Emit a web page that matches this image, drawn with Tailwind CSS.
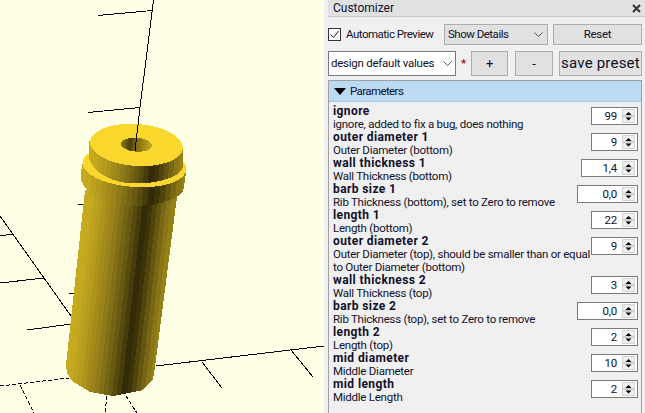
<!DOCTYPE html>
<html lang="en">
<head>
  <meta charset="UTF-8">
  <title>Customizer</title>
  <script src="https://cdn.jsdelivr.net/npm/@tailwindcss/browser@4"></script>
</head>
<body class="w-[645px] h-[413px] overflow-hidden flex bg-[#f0f0f0] font-['Roboto',sans-serif] text-[11.5px] tracking-[-0.25px] leading-[13px] text-[#10102a]">

  <!-- 3D view -->
  <div class="w-[324px] h-[413px] shrink-0 bg-[#ffffe5]">
    <svg width="324" height="413" viewBox="0 0 324 413" fill="none" shape-rendering="crispEdges">
      <defs>
        <linearGradient id="facets">
          <stop offset="0" stop-color="#c6ab20"/><stop offset=".05" stop-color="#c6ab20"/>
          <stop offset=".05" stop-color="#c4a920"/><stop offset=".10" stop-color="#c4a920"/>
          <stop offset=".10" stop-color="#bda21f"/><stop offset=".15" stop-color="#bda21f"/>
          <stop offset=".15" stop-color="#b59b1e"/><stop offset=".20" stop-color="#b59b1e"/>
          <stop offset=".20" stop-color="#ac941c"/><stop offset=".25" stop-color="#ac941c"/>
          <stop offset=".25" stop-color="#a38b1b"/><stop offset=".30" stop-color="#a38b1b"/>
          <stop offset=".30" stop-color="#99831a"/><stop offset=".35" stop-color="#99831a"/>
          <stop offset=".35" stop-color="#8e7a18"/><stop offset=".40" stop-color="#8e7a18"/>
          <stop offset=".40" stop-color="#827016"/><stop offset=".45" stop-color="#827016"/>
          <stop offset=".45" stop-color="#756414"/><stop offset=".50" stop-color="#756414"/>
          <stop offset=".50" stop-color="#675812"/><stop offset=".55" stop-color="#675812"/>
          <stop offset=".55" stop-color="#574a0f"/><stop offset=".60" stop-color="#574a0f"/>
          <stop offset=".60" stop-color="#453b0b"/><stop offset=".65" stop-color="#453b0b"/>
          <stop offset=".65" stop-color="#332b07"/><stop offset=".71" stop-color="#332b07"/>
          <stop offset=".71" stop-color="#3c3308"/><stop offset=".76" stop-color="#3c3308"/>
          <stop offset=".76" stop-color="#50440c"/><stop offset=".81" stop-color="#50440c"/>
          <stop offset=".81" stop-color="#645510"/><stop offset=".86" stop-color="#645510"/>
          <stop offset=".86" stop-color="#776614"/><stop offset=".91" stop-color="#776614"/>
          <stop offset=".91" stop-color="#8a7617"/><stop offset=".96" stop-color="#8a7617"/>
          <stop offset=".96" stop-color="#968119"/><stop offset="1" stop-color="#968119"/>
        </linearGradient>
        <linearGradient id="bodyShade" href="#facets" gradientUnits="userSpaceOnUse" x1="66" y1="365" x2="155" y2="375"/>
        <linearGradient id="collarShade" href="#facets" gradientUnits="userSpaceOnUse" x1="81" y1="175" x2="186" y2="184"/>
        <linearGradient id="bossShade" href="#facets" gradientUnits="userSpaceOnUse" x1="89" y1="150" x2="183" y2="158"/>
        <linearGradient id="holeShade" gradientUnits="userSpaceOnUse" x1="121" y1="144" x2="152" y2="146">
          <stop offset="0" stop-color="#8c7815"/><stop offset=".3" stop-color="#4a3f0a"/>
          <stop offset=".5" stop-color="#7e6c13"/><stop offset="1" stop-color="#c6aa1f"/>
        </linearGradient>
      </defs>

      <!-- axes behind the model -->
      <g stroke="#000" stroke-width="1">
        <path d="M153.500 0L140 107.500M98 15.500L152 10.500M88 112.500L140 107.500"/>
        <path d="M78 205L87 204M69 294L78 293"/>
        <path d="M0 216L71 316M0 236L13 234M0 283L44 278M27 330L71 324"/>
        <path d="M156 366L324 346M202 362L222 388M291 350L313 377"/>
        <path d="M0 386L69 378M20 385L34 413M107 396L105 413M126 396L137 413" stroke-dasharray="4 2"/>
      </g>

      <!-- barrel -->
      <path d="M85 190L66 365L67 373L72 381L90 392L113 396L143 390L153 379L155 367L177 197Z" fill="url(#bodyShade)"/>
      <!-- collar -->
      <path d="M83 162L81 172L81.500 181L85 188C95 199 115 206 133 206C155 206 175 201 183 192L185 180L186 172Z" fill="url(#collarShade)"/>
      <ellipse cx="134.500" cy="166" rx="52" ry="21" transform="rotate(4 134.500 166)" fill="#f9d72c"/>
      <!-- boss -->
      <path d="M89 141L88.500 157C92 172 112 183.500 135 183.500C160 183.500 180 177 183 167L183 147Z" fill="url(#bossShade)"/>
      <ellipse cx="136.500" cy="145" rx="46.500" ry="21" transform="rotate(4 136.500 145)" fill="#f9d72c"/>
      <ellipse cx="136.500" cy="144.700" rx="15.500" ry="7" transform="rotate(4 136.500 144.700)" fill="url(#holeShade)"/>
      <path d="M140 107.500L135 151" stroke="#000" stroke-width="1"/>
    </svg>
  </div>

  <!-- Customizer dock -->
  <div class="w-[4px] shrink-0"></div>
  <div class="flex-1 min-w-0 flex flex-col">
    <div class="h-[17px] bg-[#e1e1e1] border-b border-[#c8c8c8] flex items-center justify-between pl-[5px] pr-[4px] text-[12px] tracking-normal">
      <span>Customizer</span>
      <svg width="9" height="9" viewBox="0 0 9 9"><path d="M1 1L8 8M8 1L1 8" stroke="#333" stroke-width="2"/></svg>
    </div>

    <div class="flex items-center mt-[7px] pr-[3px] h-[21px]">
      <span class="w-[13px] h-[13px] border border-[#333] bg-white flex items-center justify-center shrink-0">
        <svg width="11" height="11" viewBox="0 0 11 11"><path d="M1.500 5.500L4.500 8.500L9.500 2" stroke="#222" fill="none"/></svg>
      </span>
      <span class="ml-[5px] w-[98px] shrink-0 whitespace-nowrap tracking-[-0.5px]">Automatic Preview</span>
      <div class="w-[104px] h-[21px] shrink-0 bg-[#e1e1e1] border border-[#adadad] flex items-center justify-between pl-[3px] pr-[4px]">
        <span class="tracking-[-0.5px]">Show Details</span>
        <svg width="9" height="5" viewBox="0 0 9 5"><path d="M.5 .5L4.500 4.500L8.500 .5" stroke="#555" fill="none"/></svg>
      </div>
      <button class="ml-[5px] flex-1 h-[21px] bg-[#e1e1e1] border border-[#adadad]">Reset</button>
    </div>

    <div class="flex items-center mt-[6px] pr-[3px] h-[25px]">
      <div class="w-[128px] h-[25px] shrink-0 bg-white border border-[#7a7a7a] flex items-center justify-between pl-[2px] pr-[3px]">
        <span class="whitespace-nowrap">design default values</span>
        <svg width="9" height="5" viewBox="0 0 9 5"><path d="M.5 .5L4.500 4.500L8.500 .5" stroke="#555" fill="none"/></svg>
      </div>
      <span class="w-[15px] shrink-0 text-center text-[#a01010] font-bold">*</span>
      <button class="w-[37px] h-[25px] shrink-0 bg-[#e1e1e1] border border-[#adadad] text-[13px]">+</button>
      <button class="ml-[7px] w-[38px] h-[25px] shrink-0 bg-[#e1e1e1] border border-[#adadad] text-[13px]">-</button>
      <button class="ml-[6px] flex-1 h-[25px] bg-[#e1e1e1] border border-[#adadad] text-[15px] tracking-[0.2px] whitespace-nowrap">save preset</button>
    </div>

    <div class="mt-[4px] mr-[3px] flex-1 border-x border-t border-[#a0a0a0]">
      <div class="h-[21px] bg-[#bcdaf2] border-b border-[#a9c9e3] flex items-center pl-[5px]">
        <svg width="12" height="7" viewBox="0 0 12 7"><path d="M0 0H12L6 7Z" fill="#000"/></svg>
        <span class="ml-[4px] mt-[1px] tracking-[-0.6px]">Parameters</span>
      </div>

      <div class="pt-[2px] pl-[4px] pr-[3px]">
        <div class="flex justify-between h-[26px]">
          <div class="whitespace-nowrap pt-[1px]"><p class="font-bold text-[12px] tracking-[0.4px]">ignore</p><p class="leading-[12px]">ignore, added to fix a bug, does nothing</p></div>
          <div class="w-[47px] h-[18px] mt-[3px] shrink-0 border border-[#7a7a7a] bg-white flex items-center justify-end pr-[2px]">
            <span class="mr-[5px]">99</span><svg width="13" height="14"><use href="#spin"/></svg>
          </div>
        </div>
        <div class="flex justify-between h-[26px]">
          <div class="whitespace-nowrap pt-[1px]"><p class="font-bold text-[12px] tracking-[0.4px]">outer diameter 1</p><p class="leading-[12px]">Outer Diameter (bottom)</p></div>
          <div class="w-[47px] h-[18px] mt-[3px] shrink-0 border border-[#7a7a7a] bg-white flex items-center justify-end pr-[2px]">
            <span class="mr-[5px]">9</span><svg width="13" height="14"><use href="#spin"/></svg>
          </div>
        </div>
        <div class="flex justify-between h-[26px]">
          <div class="whitespace-nowrap pt-[1px]"><p class="font-bold text-[12px] tracking-[0.4px]">wall thickness 1</p><p class="leading-[12px]">Wall Thickness (bottom)</p></div>
          <div class="w-[57px] h-[18px] mt-[3px] shrink-0 border border-[#7a7a7a] bg-white flex items-center justify-end pr-[2px]">
            <span class="mr-[5px]">1,4</span><svg width="13" height="14"><use href="#spin"/></svg>
          </div>
        </div>
        <div class="flex justify-between h-[26px]">
          <div class="whitespace-nowrap pt-[1px]"><p class="font-bold text-[12px] tracking-[0.4px]">barb size 1</p><p class="leading-[12px]">Rib Thickness (bottom), set to Zero to remove</p></div>
          <div class="w-[61px] h-[18px] mt-[3px] shrink-0 border border-[#7a7a7a] bg-white flex items-center justify-end pr-[2px]">
            <span class="mr-[5px]">0,0</span><svg width="13" height="14"><use href="#spin"/></svg>
          </div>
        </div>
        <div class="flex justify-between h-[26px]">
          <div class="whitespace-nowrap pt-[1px]"><p class="font-bold text-[12px] tracking-[0.4px]">length 1</p><p class="leading-[12px]">Length (bottom)</p></div>
          <div class="w-[47px] h-[18px] mt-[3px] shrink-0 border border-[#7a7a7a] bg-white flex items-center justify-end pr-[2px]">
            <span class="mr-[5px]">22</span><svg width="13" height="14"><use href="#spin"/></svg>
          </div>
        </div>
        <div class="flex justify-between h-[39px]">
          <div class="whitespace-nowrap pt-[1px]"><p class="font-bold text-[12px] tracking-[0.4px]">outer diameter 2</p><p class="leading-[12.500px]">Outer Diameter (top), should be smaller than or equal<br>to Outer Diameter (bottom)</p></div>
          <div class="w-[47px] h-[18px] mt-[3px] shrink-0 border border-[#7a7a7a] bg-white flex items-center justify-end pr-[2px]">
            <span class="mr-[5px]">9</span><svg width="13" height="14"><use href="#spin"/></svg>
          </div>
        </div>
        <div class="flex justify-between h-[26px]">
          <div class="whitespace-nowrap pt-[1px]"><p class="font-bold text-[12px] tracking-[0.4px]">wall thickness 2</p><p class="leading-[12px]">Wall Thickness (top)</p></div>
          <div class="w-[47px] h-[18px] mt-[3px] shrink-0 border border-[#7a7a7a] bg-white flex items-center justify-end pr-[2px]">
            <span class="mr-[5px]">3</span><svg width="13" height="14"><use href="#spin"/></svg>
          </div>
        </div>
        <div class="flex justify-between h-[26px]">
          <div class="whitespace-nowrap pt-[1px]"><p class="font-bold text-[12px] tracking-[0.4px]">barb size 2</p><p class="leading-[12px]">Rib Thickness (top), set to Zero to remove</p></div>
          <div class="w-[61px] h-[18px] mt-[3px] shrink-0 border border-[#7a7a7a] bg-white flex items-center justify-end pr-[2px]">
            <span class="mr-[5px]">0,0</span><svg width="13" height="14"><use href="#spin"/></svg>
          </div>
        </div>
        <div class="flex justify-between h-[26px]">
          <div class="whitespace-nowrap pt-[1px]"><p class="font-bold text-[12px] tracking-[0.4px]">length 2</p><p class="leading-[12px]">Length (top)</p></div>
          <div class="w-[47px] h-[18px] mt-[3px] shrink-0 border border-[#7a7a7a] bg-white flex items-center justify-end pr-[2px]">
            <span class="mr-[5px]">2</span><svg width="13" height="14"><use href="#spin"/></svg>
          </div>
        </div>
        <div class="flex justify-between h-[26px]">
          <div class="whitespace-nowrap pt-[1px]"><p class="font-bold text-[12px] tracking-[0.4px]">mid diameter</p><p class="leading-[12px]">Middle Diameter</p></div>
          <div class="w-[47px] h-[18px] mt-[3px] shrink-0 border border-[#7a7a7a] bg-white flex items-center justify-end pr-[2px]">
            <span class="mr-[5px]">10</span><svg width="13" height="14"><use href="#spin"/></svg>
          </div>
        </div>
        <div class="flex justify-between h-[26px]">
          <div class="whitespace-nowrap pt-[1px]"><p class="font-bold text-[12px] tracking-[0.4px]">mid length</p><p class="leading-[12px]">Middle Length</p></div>
          <div class="w-[47px] h-[18px] mt-[3px] shrink-0 border border-[#7a7a7a] bg-white flex items-center justify-end pr-[2px]">
            <span class="mr-[5px]">2</span><svg width="13" height="14"><use href="#spin"/></svg>
          </div>
        </div>
      </div>
    </div>
  </div>

  <!-- spin box arrows, shared by every row -->
  <svg width="0" height="0" class="absolute">
    <symbol id="spin" viewBox="0 0 13 14">
      <rect x=".5" y=".5" width="12" height="13" fill="#f0f0f0" stroke="#d4d4d4"/>
      <path d="M1 7H12" stroke="#b0b0b0"/>
      <path d="M6.500 3L3.500 6H9.500Z" fill="#000"/>
      <path d="M3.500 8.500H9.500L6.500 11.500Z" fill="#000"/>
    </symbol>
  </svg>
</body>
</html>
